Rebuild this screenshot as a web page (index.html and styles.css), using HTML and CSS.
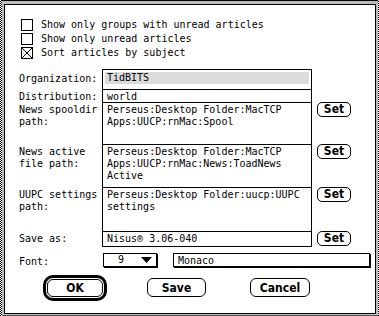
FILE: index.html
```html
<!DOCTYPE html>
<html lang="en">
<head>
  <meta charset="UTF-8" />
  <title>News Preferences</title>
  <link rel="stylesheet" href="styles.css">
</head>
<body>
  <div class="desk">
    <div class="frame">
      <div class="dialog">
        <div class="checks">
          <div class="check"><span class="box"></span>Show only groups with unread articles</div>
          <div class="check"><span class="box"></span>Show only unread articles</div>
          <div class="check">
            <span class="box">
              <svg width="10" height="10" viewBox="0 0 10 10"><path d="M0 0L10 10M10 0L0 10" stroke="#000" stroke-width="1" fill="none"/></svg>
            </span>Sort articles by subject
          </div>
        </div>

        <div class="fields">
          <div class="label org">Organization:</div>
          <div class="field org"><div class="hilite">TidBITS</div></div>
          <div></div>

          <div class="label">Distribution:</div>
          <div class="field">world</div>
          <div></div>

          <div class="label">News spooldir<br>path:</div>
          <div class="field">Perseus:Desktop Folder:MacTCP<br>Apps:UUCP:rnMac:Spool</div>
          <button class="set">Set</button>

          <div class="label">News active<br>file path:</div>
          <div class="field">Perseus:Desktop Folder:MacTCP<br>Apps:UUCP:rnMac:News:ToadNews<br>Active</div>
          <button class="set">Set</button>

          <div class="label">UUPC settings<br>path:</div>
          <div class="field">Perseus:Desktop Folder:uucp:UUPC<br>settings</div>
          <button class="set">Set</button>

          <div class="label">Save as:</div>
          <div class="field last">Nisus® 3.06-040</div>
          <button class="set">Set</button>
        </div>

        <div class="font-row">
          <div class="font-label">Font:</div>
          <div class="popup">
            <span class="popup-value">9</span>
            <svg class="arrow" width="11" height="6" viewBox="0 0 11 6"><path d="M0 0H11L5.5 6Z" fill="#000"/></svg>
          </div>
          <div class="font-name">Monaco</div>
        </div>

        <div class="buttons">
          <div class="default-ring"><button class="btn ok">OK</button></div>
          <button class="btn save">Save</button>
          <button class="btn cancel">Cancel</button>
        </div>
      </div>
    </div>
  </div>
</body>
</html>
```

FILE: styles.css
```css
body {
  margin: 0;
  background: #fff;
}
.desk {
  width: 379px;
  height: 316px;
  box-sizing: border-box;
  padding: 0 1px 0 2px;
  display: flex;
  background: repeating-conic-gradient(#000 0 25%, #fff 0 50%) 0 0 / 2px 2px;
}
.frame {
  flex: 1;
  display: flex;
  background: #bbb;
  border-top: 1px solid #000;
  border-bottom: 1px solid #555;
  padding: 3px 2px 1px 2px;
}
.dialog {
  flex: 1;
  background: #fff;
  border: 1px solid #000;
  font-family: 'DejaVu Sans Mono', 'Liberation Mono', monospace;
  font-size: 10px;
  line-height: 12px;
  color: #000;
}
.checks {
  padding: 13px 0 0 16px;
}
.check {
  display: flex;
  align-items: center;
  height: 14px;
}
.box {
  width: 12px;
  height: 12px;
  box-sizing: border-box;
  border: 1px solid #000;
  margin-right: 8px;
  display: flex;
  align-items: center;
  justify-content: center;
}
.box svg {
  display: block;
}
.fields {
  display: grid;
  grid-template-columns: 78px 210px 34px;
  grid-template-rows: 20px 13px 42px 43px 44px 16px;
  column-gap: 5px;
  margin: 9px 0 0 14px;
}
.label {
  padding-top: 2px;
  white-space: nowrap;
}
.label.org {
  padding-top: 4px;
}
.field {
  border: 1px solid #000;
  border-bottom: none;
  padding: 1px 0 0 4px;
  white-space: nowrap;
}
.field.org {
  padding: 2px 2px 0 2px;
}
.field.last {
  border-bottom: 1px solid #000;
}
.hilite {
  background: #dcdcdc;
  height: 12px;
  padding-left: 2px;
}
.set {
  align-self: start;
  height: 15px;
  width: 34px;
  padding: 0;
  margin: 0;
  background: #fff;
  border: 1px solid #000;
  border-radius: 5px;
  font-family: 'DejaVu Sans Condensed', 'Liberation Sans Narrow', 'DejaVu Sans', sans-serif;
  font-weight: bold;
  font-size: 12px;
  line-height: 13px;
  color: #000;
}
.font-row {
  display: flex;
  height: 15px;
  margin: 6px 0 0 14px;
}
.font-label {
  width: 84px;
  padding-top: 3px;
}
.popup {
  width: 54px;
  height: 14px;
  box-sizing: border-box;
  border: 1px solid #000;
  box-shadow: 1px 1px 0 #000;
  display: flex;
  align-items: center;
  padding: 0 4px 0 14px;
}
.popup-value {
  flex: 1;
}
.arrow {
  display: block;
}
.font-name {
  width: 197px;
  height: 14px;
  box-sizing: border-box;
  margin-left: 16px;
  border: 1px solid #000;
  box-shadow: 1px 1px 0 #000;
  padding: 1px 0 0 4px;
}
.buttons {
  display: flex;
  align-items: flex-start;
  margin: 7px 0 0 38px;
}
.default-ring {
  width: 64px;
  height: 26px;
  box-sizing: border-box;
  border: 3px solid #000;
  border-radius: 10px;
  padding: 1px;
}
.btn {
  display: block;
  height: 19px;
  padding: 0;
  margin: 0;
  background: #fff;
  border: 1px solid #000;
  border-radius: 6px;
  font-family: 'DejaVu Sans Condensed', 'Liberation Sans Narrow', 'DejaVu Sans', sans-serif;
  font-weight: bold;
  font-size: 12px;
  color: #000;
}
.btn.ok {
  width: 56px;
  height: 18px;
}
.btn.save {
  width: 59px;
  margin: 3px 0 0 40px;
}
.btn.cancel {
  width: 60px;
  margin: 3px 0 0 44px;
}
```
